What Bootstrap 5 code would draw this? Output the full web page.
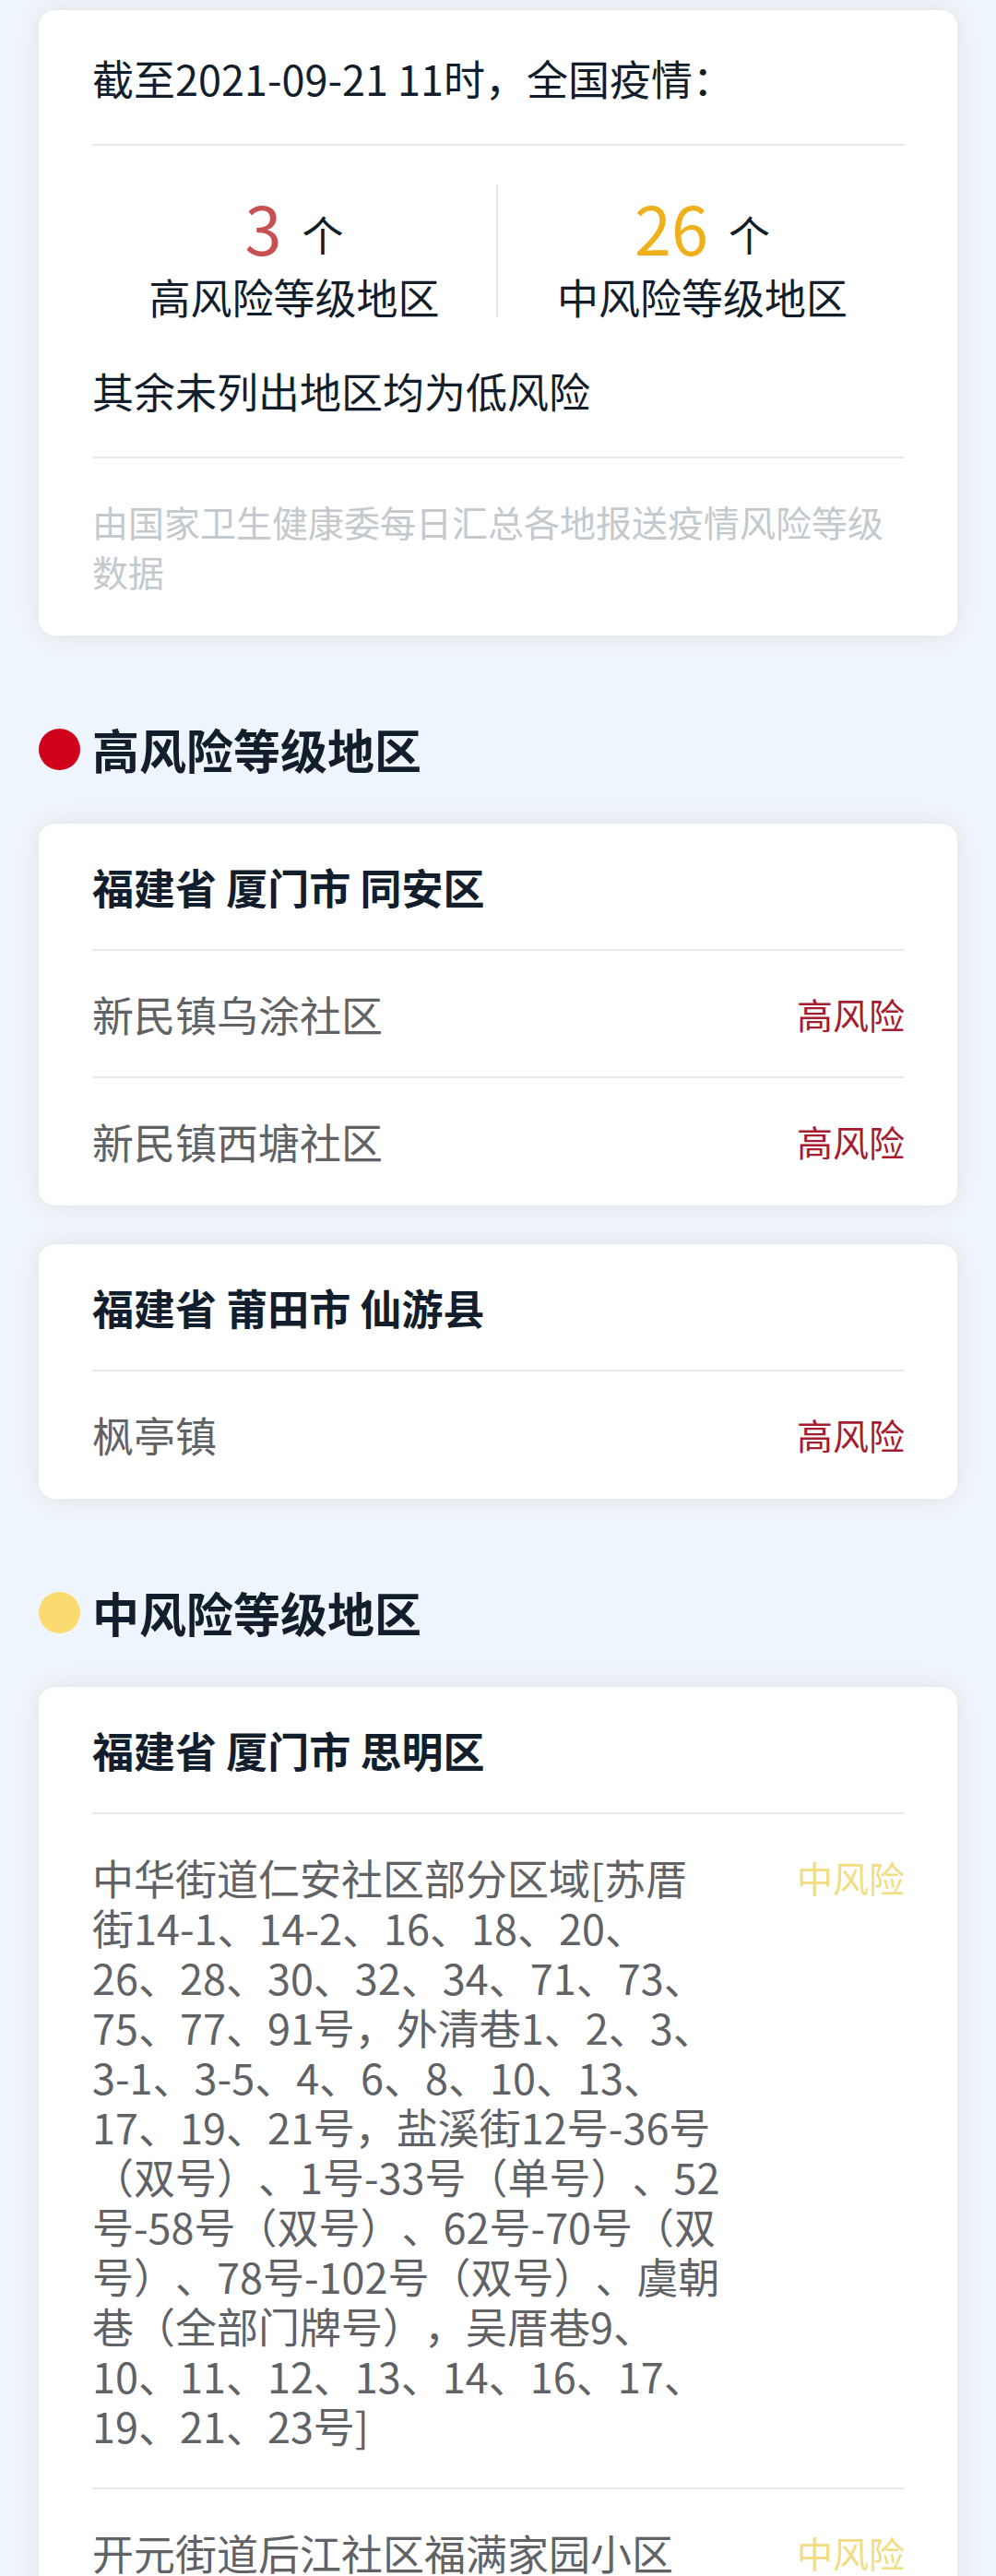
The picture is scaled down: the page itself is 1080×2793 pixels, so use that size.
<!DOCTYPE html>
<html lang="zh-CN">
<head>
	<meta charset="UTF-8">
	<meta name="viewport" content="width=device-width, initial-scale=1.0">
	<title>疫情风险等级地区</title>
	<link href="https://cdn.jsdelivr.net/npm/bootstrap@5.3.0/dist/css/bootstrap.min.css" rel="stylesheet">
	<style>
		html, body { height: 2793px; overflow: hidden; }
		body { background: #eff5fd; color: #121e2b; font-family: "Noto Sans CJK SC", sans-serif; font-size: 45px; line-height: 54px; text-spacing-trim: space-all; }
		.page { padding: 11px 42px 0; }
		.panel { border: 0; border-radius: 18px; padding: 0 57px 0 58px; color: inherit; box-shadow: 0 0 24px rgba(222, 222, 214, .75); }
		.panel + .panel { margin-top: 42px; }
		.line-b { border-bottom: 2px solid #e7e9eb; }
		.row-item { padding: 42px 0 40px; }
		.row-item:last-child { padding-bottom: 42px; }
		.date-line { padding: 47px 0 44px; }
		.rest-line { padding: 53px 0 44px; }
		.stats { padding-top: 42px; }
		.stat { width: 438px; height: 144px; padding-top: 6px; }
		.stat + .stat { width: 443px; padding-left: 2px; border-left: 2px solid #e7e9eb; }
		.count { height: 89px; line-height: 80px; }
		.stat-num { font-size: 72px; }
		.stat-unit { margin-left: 22px; vertical-align: 4px; line-height: 1; }
		.red { color: #c75053; }
		.orange { color: #efb01c; }
		.note { font-size: 39px; color: #c3c9cc; padding: 41px 0 43px; }
		.title { font-size: 51px; line-height: 60px; font-weight: 700; padding: 93px 0 51px; margin: 0; }
		.dot { width: 45px; height: 45px; margin-right: 13px; }
		.dot-high { background: #d0021b; }
		.dot-mid { background: #fbdb70; }
		.place { color: #606266; white-space: nowrap; }
		.level { font-size: 39px; line-height: 52px; white-space: nowrap; }
		.level-high { color: #a61c30; }
		.level-mid { color: #f0dd84; }
	</style>
</head>
<body>
	<div class="page">
		<!-- 汇总 -->
		<div class="card panel">
			<div class="date-line line-b">截至2021-09-21 11时，全国疫情：</div>
			<div class="stats d-flex text-center">
				<div class="stat">
					<div class="count"><span class="stat-num red">3</span><span class="stat-unit">个</span></div>
					<div>高风险等级地区</div>
				</div>
				<div class="stat">
					<div class="count"><span class="stat-num orange">26</span><span class="stat-unit">个</span></div>
					<div>中风险等级地区</div>
				</div>
			</div>
			<div class="rest-line line-b">其余未列出地区均为低风险</div>
			<div class="note">由国家卫生健康委每日汇总各地报送疫情风险等级数据</div>
		</div>

		<!-- 高风险 -->
		<h2 class="title d-flex align-items-center"><span class="dot dot-high rounded-circle"></span>高风险等级地区</h2>
		<div class="card panel">
			<div class="row-item line-b fw-bold">福建省 厦门市 同安区</div>
			<div class="row-item line-b d-flex justify-content-between">
				<div class="place">新民镇乌涂社区</div>
				<div class="level level-high">高风险</div>
			</div>
			<div class="row-item d-flex justify-content-between">
				<div class="place">新民镇西塘社区</div>
				<div class="level level-high">高风险</div>
			</div>
		</div>
		<div class="card panel">
			<div class="row-item line-b fw-bold">福建省 莆田市 仙游县</div>
			<div class="row-item d-flex justify-content-between">
				<div class="place">枫亭镇</div>
				<div class="level level-high">高风险</div>
			</div>
		</div>

		<!-- 中风险 -->
		<h2 class="title d-flex align-items-center"><span class="dot dot-mid rounded-circle"></span>中风险等级地区</h2>
		<div class="card panel">
			<div class="row-item line-b fw-bold">福建省 厦门市 思明区</div>
			<div class="row-item line-b d-flex justify-content-between">
				<div class="place">
					中华街道仁安社区部分区域[苏厝<br>
					街14-1、14-2、16、18、20、<br>
					26、28、30、32、34、71、73、<br>
					75、77、91号，外清巷1、2、3、<br>
					3-1、3-5、4、6、8、10、13、<br>
					17、19、21号，盐溪街12号-36号<br>
					（双号）、1号-33号（单号）、52<br>
					号-58号（双号）、62号-70号（双<br>
					号）、78号-102号（双号）、虞朝<br>
					巷（全部门牌号），吴厝巷9、<br>
					10、11、12、13、14、16、17、<br>
					19、21、23号]
				</div>
				<div class="level level-mid">中风险</div>
			</div>
			<div class="row-item d-flex justify-content-between">
				<div class="place">开元街道后江社区福满家园小区</div>
				<div class="level level-mid">中风险</div>
			</div>
		</div>
	</div>
	<script src="https://cdn.jsdelivr.net/npm/bootstrap@5.3.0/dist/js/bootstrap.bundle.min.js"></script>
</body>
</html>
